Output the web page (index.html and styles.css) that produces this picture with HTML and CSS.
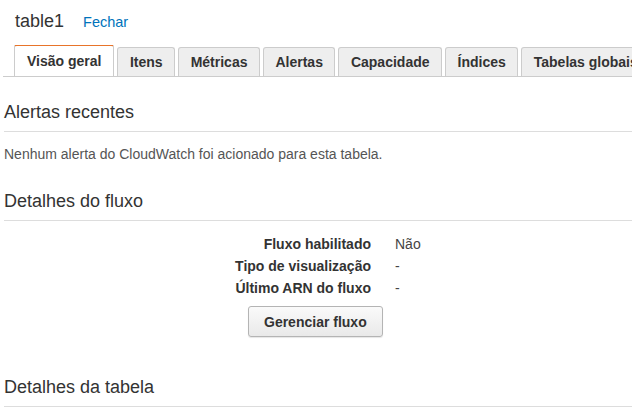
FILE: index.html
```html
<!DOCTYPE html>
<html lang="pt">
<head>
<meta charset="utf-8">
<link rel="stylesheet" href="styles.css">
</head>
<body>
<div class="header">
  <span class="title">table1</span>
  <a class="close" href="#">Fechar</a>
</div>
<div class="tabs">
  <div class="tab active">Visão geral</div>
  <div class="tab">Itens</div>
  <div class="tab">Métricas</div>
  <div class="tab">Alertas</div>
  <div class="tab">Capacidade</div>
  <div class="tab">Índices</div>
  <div class="tab">Tabelas globais</div>
</div>
<div class="content">
  <section class="section">
    <h2 class="heading">Alertas recentes</h2>
    <p class="note">Nenhum alerta do CloudWatch foi acionado para esta tabela.</p>
  </section>
  <section class="section">
    <h2 class="heading">Detalhes do fluxo</h2>
    <div class="kv">
      <div class="key">Fluxo habilitado</div><div class="val">Não</div>
      <div class="key">Tipo de visualização</div><div class="val">-</div>
      <div class="key">Último ARN do fluxo</div><div class="val">-</div>
    </div>
    <button class="btn">Gerenciar fluxo</button>
  </section>
  <section class="section last">
    <h2 class="heading">Detalhes da tabela</h2>
  </section>
</div>
</body>
</html>
```
FILE: styles.css
```css
html, body {
  margin: 0;
  padding: 0;
  background: #fff;
  overflow: hidden;
}
body {
  font-family: "Liberation Sans", Arial, sans-serif;
  color: #333;
  width: 632px;
  height: 407px;
}
.header {
  display: flex;
  align-items: baseline;
  gap: 19px;
  padding: 10px 0 0 15px;
  height: 35px;
  box-sizing: border-box;
}
.title {
  font-size: 18px;
  line-height: 22px;
  color: #333;
}
.close {
  font-size: 14.5px;
  color: #0073bb;
  text-decoration: none;
}
.tabs {
  display: flex;
  gap: 3px;
  margin: 10px 0 0 3px;
  padding-left: 11px;
  border-bottom: 1px solid #ccc;
  height: 32px;
  box-sizing: border-box;
  align-items: flex-end;
  white-space: nowrap;
  overflow: hidden;
}
.tab {
  flex: none;
  height: 29px;
  box-sizing: border-box;
  padding: 0 11.5px;
  border: 1px solid #ccc;
  border-bottom: none;
  border-radius: 3px 3px 0 0;
  background: #eee;
  font-size: 14px;
  font-weight: bold;
  line-height: 29px;
  color: #333;
}
.tab.active {
  height: 33px;
  padding: 0 12px;
  background: #fff;
  border-top: 2px solid #e8742a;
  line-height: 31px;
  margin-bottom: -1px;
}
.content {
  padding: 0 0 0 4px;
}
.heading {
  margin: 0;
  font-size: 18px;
  font-weight: normal;
  line-height: 20px;
  padding-bottom: 9px;
  border-bottom: 1px solid #ddd;
  color: #333;
}
.section:first-child .heading {
  margin-top: 25px;
}
.section + .section .heading {
  margin-top: 29px;
}
.section.last .heading {
  margin-top: 40px;
}
.note {
  margin: 14px 0 0;
  font-size: 14px;
  line-height: 16px;
  color: #555;
}
.kv {
  display: grid;
  grid-template-columns: 367px 1fr;
  column-gap: 24px;
  margin-top: 12px;
}
.key {
  text-align: right;
  font-size: 14px;
  font-weight: bold;
  line-height: 22px;
  color: #333;
}
.val {
  font-size: 14px;
  line-height: 22px;
  color: #444;
}
.btn {
  display: block;
  margin: 7px 0 0 244px;
  height: 31px;
  padding: 0 15px;
  font-family: inherit;
  font-size: 14px;
  font-weight: bold;
  color: #333;
  background: linear-gradient(#fafafa, #e9e9e9);
  border: 1px solid #b4b4b4;
  border-radius: 3px;
  box-shadow: 0 1px 1px rgba(0,0,0,0.1);
}
```
